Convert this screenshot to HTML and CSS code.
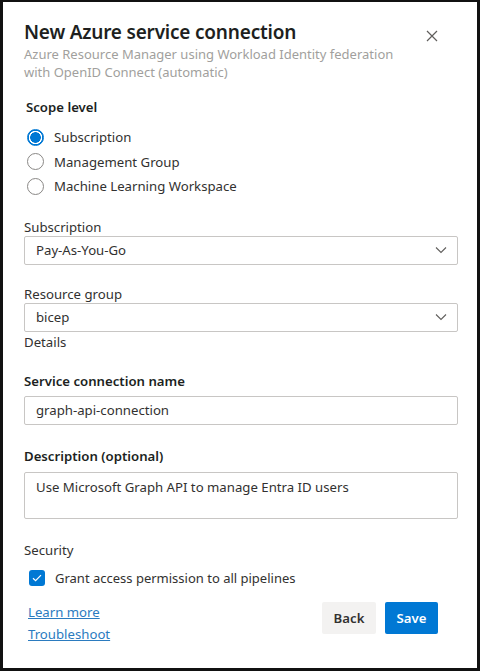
FILE: index.html
```html
<!DOCTYPE html>
<html lang="en">
<head>
    <meta charset="UTF-8">
    <title>New Azure service connection</title>
    <link rel="stylesheet" href="styles.css">
</head>
<body>
    <div class="panel">
        <div class="header">
            <div class="titles">
                <h1>New Azure service connection</h1>
                <p class="subtitle">Azure Resource Manager using Workload Identity federation with OpenID Connect (automatic)</p>
            </div>
            <button class="close" aria-label="Close">
                <svg width="12" height="12" viewBox="0 0 12 12"><path d="M1 1 L11 11 M11 1 L1 11" stroke="#605e5c" stroke-width="1.2"/></svg>
            </button>
        </div>

        <div class="section scope">
            <div class="heading">Scope level</div>
            <label class="radio checked"><span class="dot"></span>Subscription</label>
            <label class="radio"><span class="dot"></span>Management Group</label>
            <label class="radio"><span class="dot"></span>Machine Learning Workspace</label>
        </div>

        <div class="field sub">
            <div class="label">Subscription</div>
            <div class="select">
                <span class="value">Pay-As-You-Go</span>
                <svg width="12" height="8" viewBox="0 0 12 8"><path d="M1 1.5 L6 6.5 L11 1.5" fill="none" stroke="#605e5c" stroke-width="1.1"/></svg>
            </div>
        </div>

        <div class="field rg">
            <div class="label">Resource group</div>
            <div class="select">
                <span class="value">bicep</span>
                <svg width="12" height="8" viewBox="0 0 12 8"><path d="M1 1.5 L6 6.5 L11 1.5" fill="none" stroke="#605e5c" stroke-width="1.1"/></svg>
            </div>
        </div>
        <div class="label details">Details</div>

        <div class="field name">
            <div class="heading">Service connection name</div>
            <div class="input"><span class="value">graph-api-connection</span></div>
        </div>

        <div class="field desc">
            <div class="heading">Description (optional)</div>
            <div class="input textarea"><span class="value">Use Microsoft Graph API to manage Entra ID users</span></div>
        </div>

        <div class="field security">
            <div class="label">Security</div>
            <label class="check">
                <span class="box"><svg width="10" height="8" viewBox="0 0 10 8"><path d="M1 4.2 L3.6 6.6 L9 1.2" fill="none" stroke="#fff" stroke-width="1.2"/></svg></span>
                Grant access permission to all pipelines
            </label>
        </div>

        <div class="footer">
            <div class="links">
                <a href="#">Learn more</a>
                <a href="#">Troubleshoot</a>
            </div>
            <div class="buttons">
                <button class="btn back">Back</button>
                <button class="btn save">Save</button>
            </div>
        </div>
    </div>
</body>
</html>
```

FILE: styles.css
```css
html, body {
    margin: 0;
    height: 100%;
}
body {
    font-family: "Segoe UI", "Noto Sans", "Open Sans", sans-serif;
    color: #323130;
    background: #fff;
}
.panel {
    box-sizing: border-box;
    height: 671px;
    border: 3px solid #111;
    border-top-width: 2px;
    padding: 16px 21px 0 21px;
}
.header {
    display: flex;
    justify-content: space-between;
    align-items: flex-start;
}
h1 {
    margin: 0;
    font-size: 19px;
    font-weight: 600;
    color: #201f1e;
    line-height: 28px;
    letter-spacing: -0.2px;
}
.subtitle {
    margin: -1px 0 0;
    width: 395px;
    font-size: 13px;
    line-height: 18px;
    color: #a19f9d;
}
.close {
    background: none;
    border: none;
    padding: 0;
    margin: 12px 18px 0 0;
    width: 12px;
    height: 12px;
    display: flex;
}
.heading {
    font-size: 13.2px;
    font-weight: 600;
    color: #201f1e;
    line-height: 18px;
}
.label {
    font-size: 13.2px;
    color: #323130;
    line-height: 18px;
}
.scope {
    margin-top: 17px;
    padding-left: 2px;
}
.scope .heading {
    margin-bottom: 9px;
}
.radio {
    display: flex;
    align-items: center;
    font-size: 13.2px;
    height: 24.5px;
    color: #323130;
}
.dot {
    box-sizing: border-box;
    width: 17px;
    height: 17px;
    border: 1px solid #8a8886;
    border-radius: 50%;
    margin: 0 10px 0 1px;
    background: #fff;
}
.checked .dot {
    border: 1px solid #0078d4;
    background: radial-gradient(circle, #0078d4 0 5px, #fff 5.6px 6.4px, #0078d4 7px);
}
.field {
    display: flex;
    flex-direction: column;
}
.sub {
    margin-top: 19px;
}
.rg {
    margin-top: 20px;
}
.select, .input {
    box-sizing: border-box;
    height: 29px;
    width: 434px;
    border: 1px solid #c8c6c4;
    border-radius: 2px;
    display: flex;
    align-items: center;
    justify-content: space-between;
    padding: 0 10px 0 0;
    font-size: 13.2px;
    color: #323130;
}
.value {
    padding-left: 11px;
}
.details {
    margin-top: 1px;
}
.name {
    margin-top: 21px;
}
.name .input {
    margin-top: 6px;
}
.desc {
    margin-top: 22px;
}
.desc .input {
    margin-top: 7px;
}
.textarea {
    height: 47px;
    align-items: flex-start;
    padding-top: 5px;
}
.security {
    margin-top: 22px;
}
.check {
    display: flex;
    align-items: center;
    margin: 10px 0 0 5px;
    font-size: 13px;
    color: #323130;
}
.box {
    width: 16px;
    height: 16px;
    border-radius: 3px;
    background: #0078d4;
    display: flex;
    align-items: center;
    justify-content: center;
    margin-right: 10px;
}
.footer {
    margin-top: 15px;
    display: flex;
    justify-content: space-between;
    align-items: flex-start;
    padding-right: 18px;
}
.links {
    display: flex;
    flex-direction: column;
    padding-left: 4px;
    margin-top: -1px;
}
.links a {
    font-size: 13.2px;
    line-height: 22px;
    color: #2b7bbf;
    text-decoration: underline;
}
.buttons {
    display: flex;
    gap: 9px;
}
.btn {
    height: 32px;
    border: none;
    border-radius: 2px;
    font-family: inherit;
    font-size: 13.2px;
    font-weight: 600;
    padding: 0;
}
.back {
    width: 54px;
    background: #f3f2f1;
    color: #323130;
}
.save {
    width: 53px;
    background: #0078d4;
    color: #fff;
}
```
